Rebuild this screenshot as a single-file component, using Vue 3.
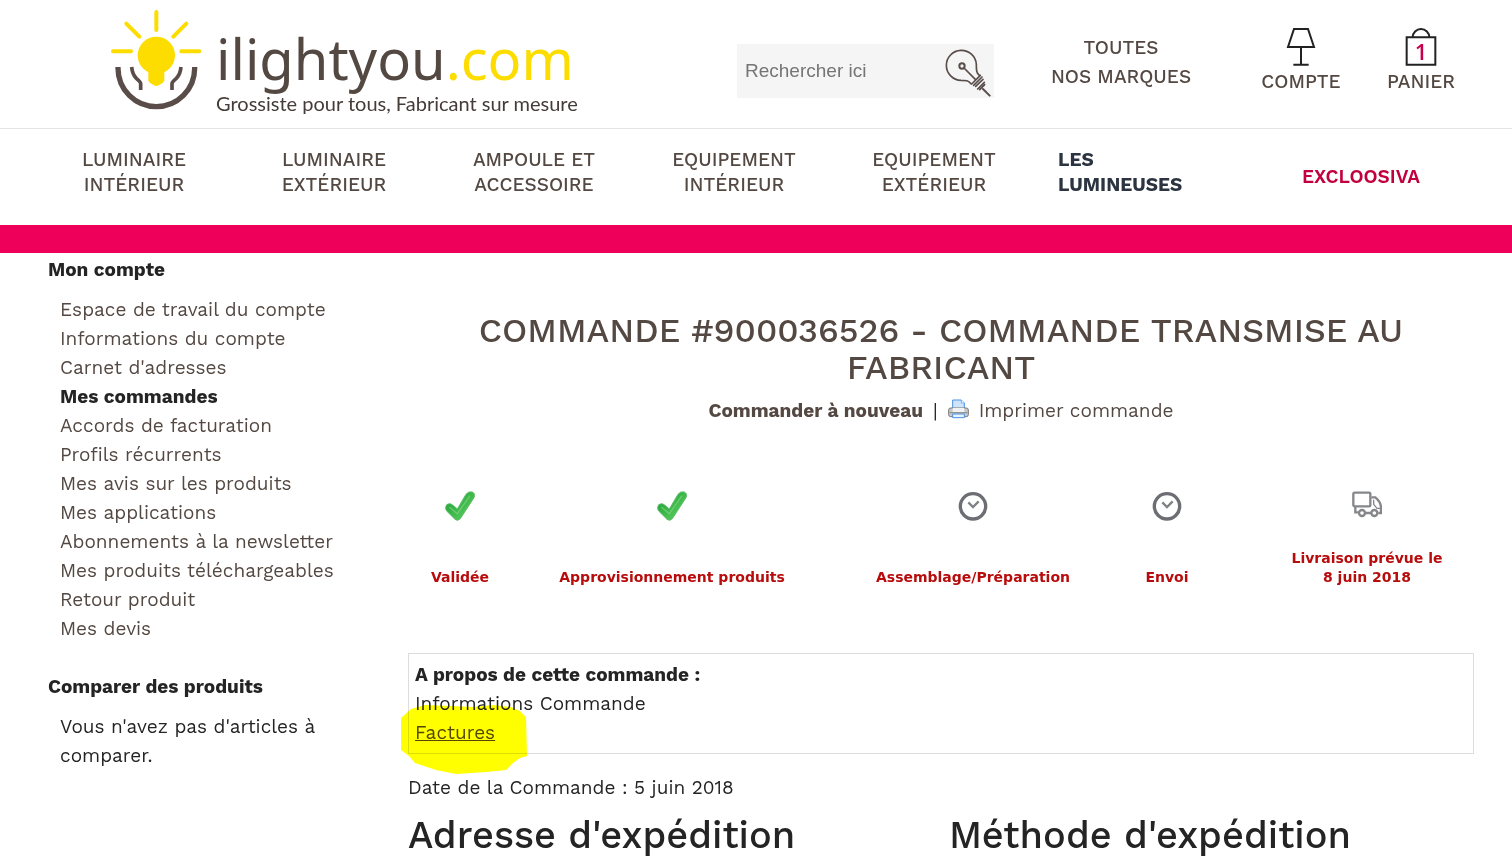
<template>
  <div class="page">
    <header class="header">
      <a href="#" class="logo">
        <svg class="logo-mark" viewBox="30 27 276 306" aria-hidden="true">
          <g fill="none" stroke="#fddc00" stroke-width="12" stroke-linecap="round">
            <path d="M169 36v54M79 71l39 39M259 71l-39 39M39 154h54M244 154h54" />
          </g>
          <circle cx="169" cy="166" r="56" fill="#fddc00" />
          <path d="M145 208h48v34q-4 8-12 11-12 10-24 0-8-3-12-11z" fill="#fddc00" />
          <g fill="none" stroke="#5a4d49">
            <path d="M54 201v4a115 115 0 0 0 230 0v-4" stroke-width="16" />
            <path d="M95 201q2 22 14 34 13 11 13 16v19M243 201q-2 22-14 34-13 11-13 16v19" stroke-width="11" />
          </g>
        </svg>
        <span class="logo-text">
          <span class="wordmark">ilightyou<span class="dotcom">.com</span></span>
          <span class="tagline">Grossiste pour tous, Fabricant sur mesure</span>
        </span>
      </a>

      <form class="search" @submit.prevent>
        <input v-model="query" type="text" placeholder="Rechercher ici" aria-label="Rechercher ici">
        <button type="submit" aria-label="Rechercher">
          <svg viewBox="0 0 138 144" fill="none" stroke="#594d4a" stroke-width="5" stroke-linecap="round" aria-hidden="true">
            <path d="M78 104C70 94 64 94 48 94A45 45 0 1 1 94 46C94 62 94 74 104 80" />
            <circle cx="51" cy="51" r="8" stroke-width="6" />
            <path d="M57 57l34 34" />
            <path d="M80 105l26-26M86 109l25-25M92 112l22-21M98 120l20-20M104 122l15-15" />
            <path d="M114 120l20 20" stroke-width="6" />
          </svg>
        </button>
      </form>

      <a href="#" class="brands">TOUTES<br>NOS MARQUES</a>

      <a href="#" class="shortcut">
        <svg viewBox="0 0 90 120" fill="none" stroke="#222" stroke-width="6" aria-hidden="true">
          <path d="M24 6h42l18 54H6zM45 60v51M22 113h46" />
        </svg>
        COMPTE
      </a>
      <a href="#" class="shortcut">
        <svg viewBox="0 0 96 120" fill="none" stroke="#222" stroke-width="6" aria-hidden="true">
          <path d="M5 31h86v82H5z" />
          <path d="M23 31a25 25 0 0 1 50 0" />
        </svg>
        <span class="count">1</span>
        PANIER
      </a>
    </header>

    <nav class="nav">
      <a v-for="item in menu" :key="item.lines.join(' ')" href="#" :class="item.type">
        <span v-for="line in item.lines" :key="line">{{ line }}</span>
      </a>
    </nav>
    <div class="stripe"></div>

    <div class="main">
      <aside class="sidebar">
        <h3>Mon compte</h3>
        <ul>
          <li v-for="link in accountLinks" :key="link">
            <strong v-if="link === current">{{ link }}</strong>
            <a v-else href="#">{{ link }}</a>
          </li>
        </ul>
        <h3>Comparer des produits</h3>
        <p>Vous n'avez pas d'articles à comparer.</p>
      </aside>

      <main class="content">
        <h1>Commande #900036526 - Commande transmise au fabricant</h1>
        <div class="order-links">
          <a href="#" class="reorder">Commander à nouveau</a>
          <span>|</span>
          <a href="#" class="print">
            <svg viewBox="0 0 63 60" aria-hidden="true">
              <path d="M14 3h26l9 9v20H14z" fill="#cfe4fb" stroke="#4b91e2" stroke-width="3" />
              <path d="M40 3v9h9" fill="#fff" stroke="#4b91e2" stroke-width="2" />
              <rect x="2" y="27" width="59" height="26" rx="6" fill="#c9c9c9" stroke="#777" stroke-width="3" />
              <path d="M14 27h35v13H14z" fill="#f2f2f2" />
              <path d="M5 41h53" stroke="#888" stroke-width="3" />
              <path d="M14 45h35v11H14z" fill="#eaf4ff" stroke="#4b91e2" stroke-width="3" />
            </svg>
            Imprimer commande
          </a>
        </div>

        <ol class="steps">
          <li v-for="step in steps" :key="step.label">
            <svg v-if="step.icon === 'check'" viewBox="0 0 90 90" aria-hidden="true">
              <defs>
                <linearGradient id="tick" x1="0" y1="0" x2="1" y2="1">
                  <stop offset="0" stop-color="#149b2c" />
                  <stop offset="1" stop-color="#68d668" />
                </linearGradient>
              </defs>
              <path d="M2 50Q2 38 14 38 20 38 37 54L63 10Q70 0 82 3 92 8 87 20L46 83Q38 92 30 85L5 60Q2 56 2 50z" fill="url(#tick)" stroke="#5fbc6a" stroke-width="3" />
              <path d="M13 48l24 20 38-54" fill="none" stroke="#8ad690" stroke-width="4" opacity="0.6" />
            </svg>
            <svg v-else-if="step.icon === 'clock'" viewBox="0 0 90 90" fill="none" aria-hidden="true">
              <circle cx="45" cy="46" r="38" stroke="#6c6e73" stroke-width="10" />
              <path d="M31 34l14 14 17-17" stroke="#808287" stroke-width="7" />
            </svg>
            <svg v-else viewBox="0 0 90 90" fill="none" stroke="#85878b" stroke-width="7" aria-hidden="true">
              <rect x="4" y="5" width="51" height="41" rx="4" />
              <path d="M58 19h12q18 15 17 33v14h-8M10 46v18h8M39 66h18" />
              <path d="M65 26v14l10 12h9" stroke-width="4" />
              <circle cx="30" cy="66" r="9" />
              <circle cx="67" cy="66" r="9" />
            </svg>
            <span class="step-label">{{ step.label }}</span>
          </li>
        </ol>

        <section class="about">
          <strong>A propos de cette commande :</strong>
          <span>Informations Commande</span>
          <span class="marked">
            <a href="#">Factures</a>
            <svg class="marker" viewBox="0 0 126 69" aria-hidden="true">
              <path d="M0 13L10 4 24 0 50 1 72 2 92 0 110 2 119 6 125 12 126 51 119 53 112 58 105 65 85 67 55 69 35 65 14 58 8 51 0 45z" fill="#ff0" />
            </svg>
          </span>
        </section>

        <p class="date">Date de la Commande : 5 juin 2018</p>
        <div class="columns">
          <h2>Adresse d'expédition</h2>
          <h2>Méthode d'expédition</h2>
        </div>
      </main>
    </div>
  </div>
</template>

<script setup>
import { ref } from 'vue'

const query = ref('')
const current = 'Mes commandes'

const menu = [
  { lines: ['LUMINAIRE', 'INTÉRIEUR'] },
  { lines: ['LUMINAIRE', 'EXTÉRIEUR'] },
  { lines: ['AMPOULE ET', 'ACCESSOIRE'] },
  { lines: ['EQUIPEMENT', 'INTÉRIEUR'] },
  { lines: ['EQUIPEMENT', 'EXTÉRIEUR'] },
  { lines: ['LES', 'LUMINEUSES'], type: 'featured' },
  { lines: ['EXCLOOSIVA'], type: 'exclusive' }
]

const accountLinks = [
  'Espace de travail du compte',
  'Informations du compte',
  "Carnet d'adresses",
  'Mes commandes',
  'Accords de facturation',
  'Profils récurrents',
  'Mes avis sur les produits',
  'Mes applications',
  'Abonnements à la newsletter',
  'Mes produits téléchargeables',
  'Retour produit',
  'Mes devis'
]

const steps = [
  { label: 'Validée', icon: 'check' },
  { label: 'Approvisionnement produits', icon: 'check' },
  { label: 'Assemblage/Préparation', icon: 'clock' },
  { label: 'Envoi', icon: 'clock' },
  { label: 'Livraison prévue le 8 juin 2018', icon: 'truck' }
]
</script>

<style>
body {
  margin: 0;
  background: #fff;
}
</style>

<style scoped>
.page {
  height: 100vh;
  overflow: hidden;
  font: 19px/29px "Work Sans", Inter, sans-serif;
  color: #242424;
}

a {
  color: #544842;
  text-decoration: none;
}

h1, h2, h3, p, ul, ol {
  margin: 0;
  padding: 0;
  list-style: none;
}

svg {
  display: block;
}

.header {
  display: grid;
  grid-template-columns:
    minmax(0, 627fr) minmax(0, 257fr) minmax(0, 254fr)
    minmax(0, 106fr) minmax(0, 134fr);
  align-items: start;
  height: 128px;
  padding: 0 24px 0 110px;
  border-bottom: 1px solid #e5e5e5;
}

.logo {
  display: flex;
  gap: 14px;
  padding-top: 9px;
}

.logo-mark {
  width: 92px;
  height: 102px;
}

.logo-text {
  display: flex;
  flex-direction: column;
  gap: 3px;
  padding-top: 19px;
  white-space: nowrap;
}

.wordmark {
  font: 56px/60px "Noto Sans", sans-serif;
}

.dotcom {
  color: #fddc00;
}

.tagline {
  font: 20px/24px Lato, sans-serif;
  color: #453b38;
}

.search {
  display: flex;
  height: 54px;
  margin-top: 44px;
  background: #f5f5f5;
}

.search input {
  flex: 1;
  min-width: 0;
  padding: 0 8px;
  border: 0;
  background: none;
  font: 19px "Liberation Sans", sans-serif;
}

.search input::placeholder {
  color: #757575;
}

.search button {
  padding: 3px 3px 0 0;
  border: 0;
  background: none;
}

.search svg {
  width: 46px;
  height: 48px;
}

.brands {
  padding-top: 33px;
  text-align: center;
  font-weight: 500;
}

.shortcut {
  position: relative;
  display: flex;
  flex-direction: column;
  align-items: center;
  padding-top: 27px;
  font-weight: 500;
}

.shortcut svg {
  height: 40px;
}

.count {
  position: absolute;
  top: 37px;
  color: #c8004b;
  font: 600 22px/29px "Open Sans", sans-serif;
}

.nav {
  display: grid;
  grid-template-columns: repeat(6, 200fr) 254fr;
  align-items: center;
  height: 96px;
  box-sizing: border-box;
  padding: 0 24px 10px 34px;
  line-height: 25px;
  font-weight: 500;
  text-align: center;
}

.nav span {
  display: block;
}

.nav .featured {
  padding-left: 24px;
  text-align: left;
  font-weight: 700;
  color: #2b3440;
}

.nav .exclusive {
  font-weight: 600;
  color: #c2003f;
  padding-top: 8px;
}

.stripe {
  height: 28px;
  background: #ee005a;
}

.main {
  display: grid;
  grid-template-columns: 312px 1fr;
  gap: 48px;
  padding: 0 38px 0 48px;
}

.sidebar {
  padding-top: 2px;
}

.sidebar h3 {
  margin-bottom: 11px;
  font-size: 19px;
}

.sidebar ul {
  margin-bottom: 29px;
  padding-left: 12px;
}

.sidebar p {
  padding: 0 24px 0 12px;
}

strong {
  font-weight: 700;
}

.content {
  padding-top: 59px;
}

h1 {
  color: #544842;
  font-size: 34px;
  line-height: 37px;
  font-weight: 500;
  text-align: center;
  text-transform: uppercase;
}

.order-links {
  display: flex;
  justify-content: center;
  gap: 10px;
  margin-top: 10px;
}

.reorder {
  font-weight: 700;
}

.print {
  display: flex;
  gap: 10px;
}

.print svg {
  width: 21px;
  height: 20px;
  margin-top: 3px;
}

.steps {
  display: grid;
  grid-template-columns: 104fr 320fr 282fr 106fr 254fr;
  margin-top: 66px;
}

.steps li {
  display: flex;
  flex-direction: column;
  align-items: center;
  gap: 28px;
}

.steps li:last-child {
  margin-left: 40px;
}

.steps svg {
  width: 30px;
  height: 30px;
}

.step-label {
  display: flex;
  align-items: flex-end;
  height: 38px;
  max-width: 160px;
  font: bold 14px/19px "DejaVu Sans", sans-serif;
  color: #b80c0c;
  text-align: center;
}

.steps li:not(:last-child) .step-label {
  max-width: none;
}

.about {
  display: flex;
  flex-direction: column;
  margin-top: 66px;
  padding: 6px;
  border: 1px solid #ddd;
}

.marked {
  position: relative;
}

.marked a {
  text-decoration: underline;
}

.marker {
  position: absolute;
  top: -13px;
  left: -14px;
  width: 126px;
  height: 69px;
  mix-blend-mode: multiply;
  pointer-events: none;
}

.date {
  margin-top: 19px;
}

.columns {
  display: grid;
  grid-template-columns: 1fr 1fr;
  gap: 16px;
  margin-top: 10px;
}

h2 {
  font-size: 38px;
  line-height: 46px;
  font-weight: 500;
  white-space: nowrap;
}
</style>
